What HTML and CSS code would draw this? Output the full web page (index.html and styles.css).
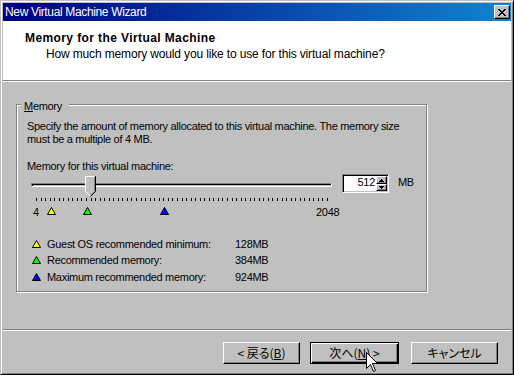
FILE: index.html
```html
<!DOCTYPE html>
<html>
<head>
  <meta charset="utf-8">
  <title>New Virtual Machine Wizard</title>
  <link rel="stylesheet" href="styles.css">
</head>
<body>
  <div class="window">
    <div class="titlebar">
      <span class="title">New Virtual Machine Wizard</span>
      <span class="close-btn">
        <svg width="8" height="7" viewBox="0 0 8 7" shape-rendering="crispEdges"><path d="M0 0h2v1h-2z M6 0h2v1h-2z M1 1h2v1h-2z M5 1h2v1h-2z M2 2h4v1h-4z M3 3h2v1h-2z M2 4h4v1h-4z M1 5h2v1h-2z M5 5h2v1h-2z M0 6h2v1h-2z M6 6h2v1h-2z" fill="#000"/></svg>
      </span>
    </div>

    <div class="header">
      <div class="header-title">Memory for the Virtual Machine</div>
      <div class="header-sub">How much memory would you like to use for this virtual machine?</div>
    </div>
    <div class="sep"></div>

    <div class="main">
      <div class="group">
        <span class="group-label"><u>M</u>emory</span>
        <p class="desc">Specify the amount of memory allocated to this virtual machine. The memory size must be a multiple of 4 MB.</p>
        <div class="field-label">Memory for this virtual machine:</div>

        <div class="slider-row">
          <div class="slider">
            <div class="track"></div>
            <svg class="thumb" width="11" height="21" viewBox="0 0 11 21">
              <path d="M0 0H11V15L5.5 20.5L0 15Z" fill="#c0c0c0"/>
              <path d="M0.5 15.5V0.5H10M0.5 15.5L5 20" stroke="#fff" fill="none"/>
              <path d="M9.5 1V15.2L5.5 19.2" stroke="#808080" fill="none"/>
              <path d="M10.5 0V15.5L5.5 20.5" stroke="#000" fill="none"/>
            </svg>
            <svg class="ticks" id="ticks" width="302" height="3" shape-rendering="crispEdges"></svg>
            <div class="scale">
              <span class="scale-num scale-min">4</span>
              <svg class="mark mark-min" width="9" height="8"><polygon points="4.5,0.5 8.5,7.5 0.5,7.5" fill="#ffff00" stroke="#000"/></svg>
              <svg class="mark mark-rec" width="9" height="8"><polygon points="4.5,0.5 8.5,7.5 0.5,7.5" fill="#00ff00" stroke="#000"/></svg>
              <svg class="mark mark-max" width="9" height="8"><polygon points="4.5,0.5 8.5,7.5 0.5,7.5" fill="#0000ff" stroke="#000"/></svg>
              <span class="scale-num scale-max">2048</span>
            </div>
          </div>

          <div class="spin">
            <span class="spin-value">512</span>
            <span class="spin-buttons">
              <span class="spin-btn up"><svg width="5" height="3" shape-rendering="crispEdges"><path d="M2 0h1v1h1v1h1v1h-5v-1h1v-1h1z" fill="#000"/></svg></span>
              <span class="spin-btn down"><svg width="5" height="3" shape-rendering="crispEdges"><path d="M0 0h5v1h-1v1h-1v1h-1v-1h-1v-1h-1z" fill="#000"/></svg></span>
            </span>
          </div>
          <span class="unit">MB</span>
        </div>

        <ul class="legend">
          <li>
            <svg width="9" height="8"><polygon points="4.5,0.5 8.5,7.5 0.5,7.5" fill="#ffff00" stroke="#000"/></svg>
            <span class="legend-name">Guest OS recommended minimum:</span>
            <span>128MB</span>
          </li>
          <li>
            <svg width="9" height="8"><polygon points="4.5,0.5 8.5,7.5 0.5,7.5" fill="#00ff00" stroke="#000"/></svg>
            <span class="legend-name">Recommended memory:</span>
            <span>384MB</span>
          </li>
          <li>
            <svg width="9" height="8"><polygon points="4.5,0.5 8.5,7.5 0.5,7.5" fill="#0000ff" stroke="#000"/></svg>
            <span class="legend-name">Maximum recommended memory:</span>
            <span>924MB</span>
          </li>
        </ul>
      </div>
    </div>
    <div class="sep"></div>

    <div class="footer">
      <button class="btn btn-back">&lt; 戻る(<u>B</u>)</button>
      <button class="btn btn-default">次へ(<u>N</u>) &gt;</button>
      <button class="btn btn-cancel">キャンセル</button>
    </div>

    <svg class="cursor" width="13" height="20" viewBox="0 0 13 20">
      <path d="M0.5 0.5V16.5L4.5 12.5L7.5 19.5L9.5 18.5L6.5 11.5H11.5Z" fill="#fff" stroke="#000"/>
    </svg>
  </div>

  <script>
    // tick marks: 65 ticks across the slider range
    var ticks = document.getElementById('ticks');
    for (var i = 0; i <= 64; i++) {
      var r = document.createElementNS('http://www.w3.org/2000/svg', 'rect');
      r.setAttribute('x', 6 + Math.round(i * 291 / 64));
      r.setAttribute('y', 0);
      r.setAttribute('width', 1);
      r.setAttribute('height', 3);
      r.setAttribute('fill', '#000');
      ticks.appendChild(r);
    }
  </script>
</body>
</html>
```

FILE: styles.css
```css
* {
    box-sizing: border-box;
}
html, body {
    margin: 0;
    padding: 0;
}
body {
    width: 514px;
    height: 375px;
    overflow: hidden;
    font-family: "Liberation Sans", Arial, sans-serif;
    font-size: 12px;
    letter-spacing: -0.15px;
    color: #000;
    background-color: #c0c0c0;
}
.window {
    position: relative;
    width: 514px;
    height: 375px;
    display: flex;
    flex-direction: column;
    background-color: #c0c0c0;
    border: 1px solid;
    border-color: #c0c0c0 #000 #000 #c0c0c0;
    box-shadow: inset 1px 1px 0 #fff, inset -1px -1px 0 #808080;
    padding: 2px;
}
.titlebar {
    height: 18px;
    flex-shrink: 0;
    display: flex;
    align-items: center;
    justify-content: space-between;
    padding: 0 1px 0 2px;
    background: linear-gradient(to right, #000080, #1084d0);
    color: #fff;
}
.title {
    line-height: 18px;
    letter-spacing: -0.35px;
}
.close-btn {
    width: 16px;
    height: 14px;
    display: flex;
    align-items: center;
    justify-content: center;
    background-color: #c0c0c0;
    border: 1px solid;
    border-color: #fff #000 #000 #fff;
    box-shadow: inset -1px -1px 0 #808080;
}
.close-btn svg {
    display: block;
    margin-left: -1px;
}
.header {
    height: 59px;
    flex-shrink: 0;
    background-color: #fff;
    padding: 10px 0 0 22px;
}
.header-title {
    font-weight: bold;
    letter-spacing: 0.4px;
    line-height: 14px;
}
.header-sub {
    margin: 2px 0 0 21px;
    line-height: 14px;
}
.sep {
    height: 2px;
    flex-shrink: 0;
    border-top: 1px solid #808080;
    border-bottom: 1px solid #fff;
}
.main {
    height: 247px;
    flex-shrink: 0;
    padding: 22px 0 0 13px;
}
.group {
    position: relative;
    width: 411px;
    height: 188px;
    border: 1px solid #808080;
    box-shadow: 1px 1px 0 #fff, inset 1px 1px 0 #fff;
    padding: 15px 10px 0 10px;
    font-size: 11px;
    letter-spacing: -0.3px;
}
.group-label {
    position: absolute;
    left: 4px;
    top: -5px;
    padding: 0 7px 0 3px;
    line-height: 13px;
    background-color: #c0c0c0;
}
.desc {
    margin: 0;
    line-height: 13px;
}
.field-label {
    margin-top: 14px;
    line-height: 13px;
}
.slider-row {
    display: flex;
    align-items: flex-start;
    margin-top: 1px;
}
.slider {
    position: relative;
    width: 302px;
    height: 44px;
    margin-left: 3px;
}
.track {
    width: 301px;
    height: 4px;
    margin: 9px 0 0 1px;
    border-top: 1px solid #808080;
    border-left: 1px solid #808080;
    border-bottom: 1px solid #fff;
    border-right: 1px solid #fff;
    box-shadow: inset 1px 1px 0 #000;
}
.thumb {
    position: absolute;
    left: 55px;
    top: 2px;
}
.ticks {
    display: block;
    margin-top: 11px;
}
.scale {
    position: relative;
    height: 17px;
    margin-top: 6px;
}
.scale-num {
    position: absolute;
    top: -1px;
    line-height: 13px;
}
.scale-min {
    left: 3px;
}
.scale-max {
    left: 286px;
}
.mark {
    position: absolute;
    top: 0;
}
.mark-min {
    left: 17px;
}
.mark-rec {
    left: 53px;
}
.mark-max {
    left: 130px;
}
.spin {
    display: flex;
    width: 47px;
    height: 19px;
    margin-left: 10px;
    background-color: #fff;
    border: 1px solid;
    border-color: #808080 #fff #fff #808080;
    box-shadow: inset 1px 1px 0 #000, inset -1px -1px 0 #c0c0c0;
    padding: 1px;
}
.spin-value {
    flex: 1;
    text-align: right;
    padding-right: 1px;
    line-height: 13px;
}
.spin-buttons {
    width: 11px;
    display: flex;
    flex-direction: column;
}
.spin-btn {
    display: flex;
    align-items: center;
    justify-content: center;
    background-color: #c0c0c0;
    border: 1px solid;
    border-color: #fff #000 #000 #fff;
    box-shadow: inset -1px -1px 0 #808080;
}
.spin-btn.up {
    height: 8px;
}
.spin-btn.down {
    height: 7px;
}
.spin-btn svg {
    display: block;
}
.unit {
    margin: 2px 0 0 9px;
    line-height: 13px;
}
.legend {
    list-style: none;
    margin: 18px 0 0 5px;
    padding: 0;
}
.legend li {
    display: flex;
    align-items: flex-start;
    line-height: 16.33px;
}
.legend svg {
    flex-shrink: 0;
    margin: 4px 6px 0 0;
}
.legend-name {
    width: 188px;
}
.footer {
    flex: 1;
    display: flex;
    justify-content: flex-end;
    align-items: flex-start;
    padding: 11px 13px 0 0;
}
.btn {
    height: 22px;
    padding: 0;
    margin: 0;
    font-family: "Noto Sans CJK JP", sans-serif;
    font-size: 12px;
    letter-spacing: 0;
    font-feature-settings: "palt";
    color: #000;
    background-color: #c0c0c0;
    border: 1px solid;
    border-color: #fff #000 #000 #fff;
    box-shadow: inset -1px -1px 0 #808080;
    border-radius: 0;
    line-height: 18px;
}
.btn-back {
    width: 77px;
}
.btn-default {
    width: 89px;
    margin-left: 10px;
    border-color: #000;
    box-shadow: inset 1px 1px 0 #fff, inset -1px -1px 0 #000, inset -2px -2px 0 #808080;
}
.btn-cancel {
    width: 87px;
    margin-left: 12px;
}
.cursor {
    position: absolute;
    left: 365px;
    top: 351px;
}
```
